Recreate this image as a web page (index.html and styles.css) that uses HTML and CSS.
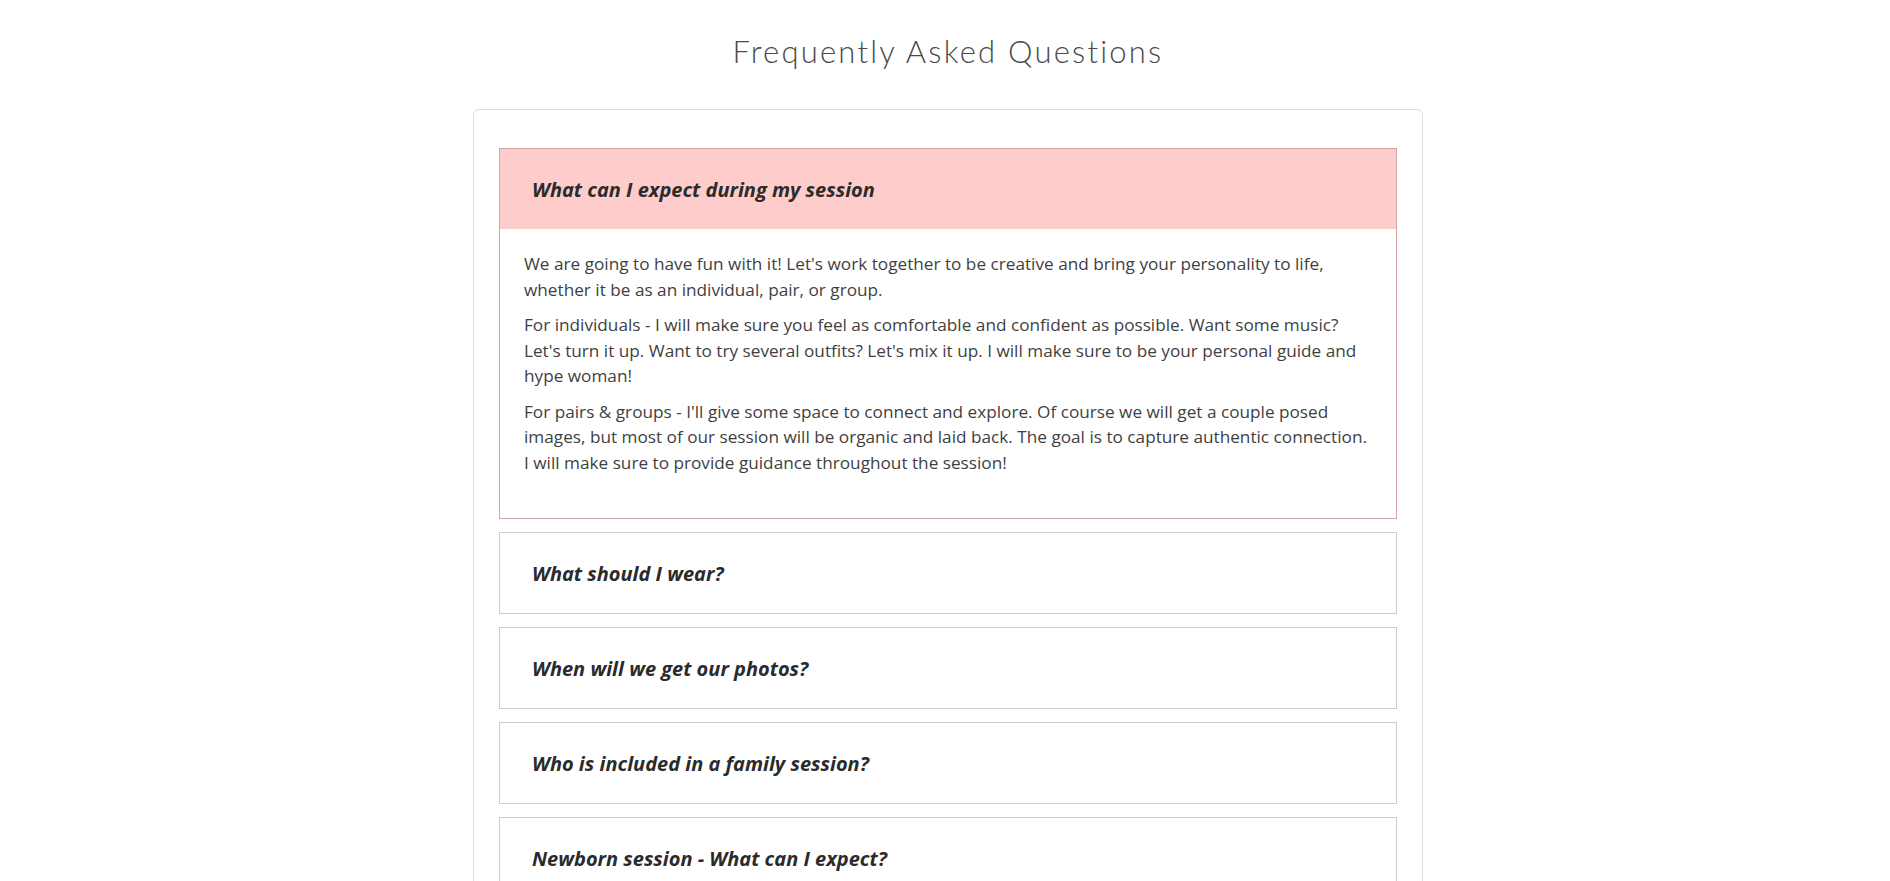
FILE: index.html
```html
<!DOCTYPE html>
<html lang="en">
<head>
    <meta charset="UTF-8">
    <meta name="viewport" content="width=device-width, initial-scale=1.0">
    <title>Frequently Asked Questions</title>
    <link rel="stylesheet" href="styles.css">
</head>
<body>
    <div class="page">
        <h1 class="page-title">Frequently Asked Questions</h1>
        <div class="faq-card">
            <details class="faq-item" open>
                <summary class="faq-question">What can I expect during my session</summary>
                <div class="faq-answer">
                    <p>We are going to have fun with it! Let's work together to be creative and bring your personality to life, whether it be as an individual, pair, or group.</p>
                    <p>For individuals - I will make sure you feel as comfortable and confident as possible. Want some music? Let's turn it up. Want to try several outfits? Let's mix it up. I will make sure to be your personal guide and hype woman!</p>
                    <p>For pairs &amp; groups - I'll give some space to connect and explore. Of course we will get a couple posed images, but most of our session will be organic and laid back. The goal is to capture authentic connection. I will make sure to provide guidance throughout the session!</p>
                </div>
            </details>
            <details class="faq-item">
                <summary class="faq-question">What should I wear?</summary>
            </details>
            <details class="faq-item">
                <summary class="faq-question">When will we get our photos?</summary>
            </details>
            <details class="faq-item">
                <summary class="faq-question">Who is included in a family session?</summary>
            </details>
            <details class="faq-item">
                <summary class="faq-question">Newborn session - What can I expect?</summary>
            </details>
        </div>
    </div>
</body>
</html>
```

FILE: styles.css
```css
body {
    margin: 0;
    background-color: #fff;
    color: #333;
    font-family: 'Open Sans', Lato, sans-serif;
}
.page {
    width: 950px;
    margin: 0 auto;
    padding-left: 6px;
    padding-bottom: 40px;
}
.page-title {
    margin: 0 0 38px;
    padding-top: 31px;
    line-height: 40px;
    font-family: Lato, sans-serif;
    font-size: 31px;
    font-weight: 300;
    letter-spacing: 2.2px;
    color: #4a4a4a;
    text-align: center;
}
.faq-card {
    border: 1px solid #ddd;
    border-radius: 6px;
    padding: 38px 25px 25px;
}
.faq-item {
    border: 1px solid #ccc;
    margin-bottom: 13px;
}
.faq-item[open] {
    border-color: #d4a3a3;
}
.faq-question {
    list-style: none;
    display: flex;
    align-items: center;
    height: 80px;
    padding: 0 32px;
    font-size: 20px;
    font-weight: bold;
    font-style: italic;
    color: #2b2b2b;
    cursor: pointer;
}
.faq-question::-webkit-details-marker {
    display: none;
}
.faq-item[open] .faq-question {
    background-color: #ffcccc;
}
.faq-answer {
    padding: 22px 24px 33px;
    font-size: 17.2px;
    line-height: 25.5px;
    color: #3f3f3f;
}
.faq-answer p {
    margin: 0 0 10px;
}
```
